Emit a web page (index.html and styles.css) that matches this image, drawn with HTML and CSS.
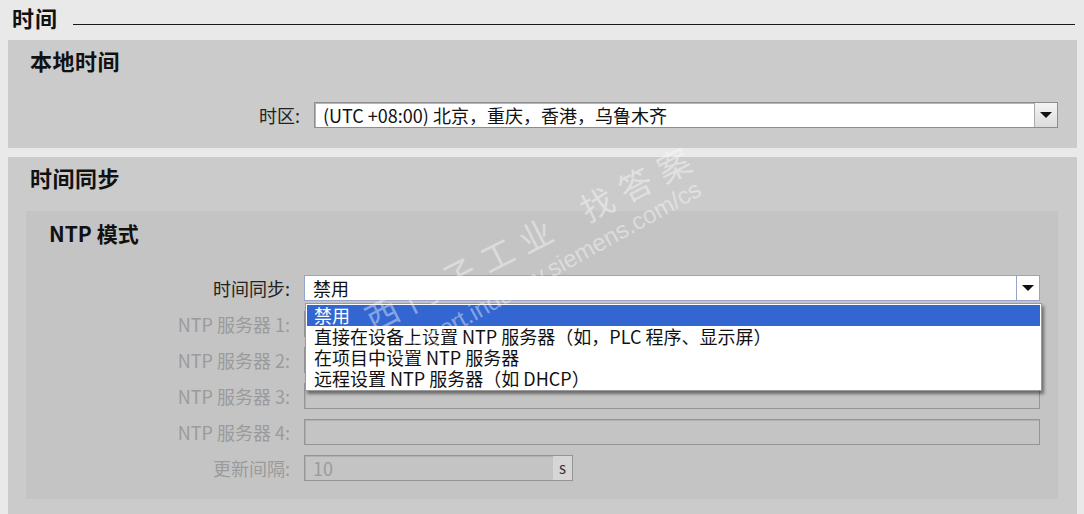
FILE: index.html
```html
<!DOCTYPE html>
<html lang="zh">
<head>
<meta charset="utf-8">
<title>时间</title>
<link rel="stylesheet" href="styles.css">
</head>
<body>
<div class="title-row">
  <h1 class="title">时间</h1>
  <div class="rule"></div>
</div>

<section class="panel panel-local">
  <h2 class="panel-head">本地时间</h2>
  <div class="form-grid grid-local">
    <label class="lbl">时区:</label>
    <div class="select">
      <span class="select-text">(UTC +08:00) 北京，重庆，香港，乌鲁木齐</span>
      <span class="select-btn"><span class="tri"></span></span>
    </div>
  </div>
</section>

<section class="panel panel-sync">
  <h2 class="panel-head">时间同步</h2>
  <div class="inner">
    <h3 class="inner-head">NTP 模式</h3>
    <div class="form-grid grid-ntp">
      <label class="lbl">时间同步:</label>
      <div class="select select-focus">
        <span class="select-text">禁用</span>
        <span class="select-btn"><span class="tri"></span></span>
        <ul class="dropdown">
          <li class="opt opt-sel">禁用</li>
          <li class="opt">直接在设备上设置 NTP 服务器（如，PLC 程序、显示屏）</li>
          <li class="opt">在项目中设置 NTP 服务器</li>
          <li class="opt">远程设置 NTP 服务器（如 DHCP）</li>
        </ul>
      </div>

      <label class="lbl dis">NTP 服务器 1:</label>
      <div class="field"></div>
      <label class="lbl dis">NTP 服务器 2:</label>
      <div class="field"></div>
      <label class="lbl dis">NTP 服务器 3:</label>
      <div class="field"></div>
      <label class="lbl dis">NTP 服务器 4:</label>
      <div class="field"></div>
      <label class="lbl dis">更新间隔:</label>
      <div class="field field-short"><span class="field-val">10</span><span class="unit">s</span></div>
    </div>
  </div>
</section>

<div class="watermark">
  <span class="wm1">西门子工业<span class="wm-gap"></span>找答案</span>
  <span class="wm2">support.industry.siemens.com/cs</span>
</div>
</body>
</html>
```

FILE: styles.css
```css
* { box-sizing: border-box; }

body {
  margin: 0;
  background: #e9e9e9;
  font-family: "Noto Sans CJK SC", "Noto Sans", sans-serif;
  font-size: 18px;
  color: #111;
  height: 514px;
  overflow: hidden;
  position: relative;
}

.title-row {
  display: flex;
  align-items: flex-start;
  height: 40px;
  padding: 3px 9px 0 12px;
}

.title {
  margin: 0;
  font-size: 22px;
  line-height: 28px;
  font-weight: 700;
  letter-spacing: 1px;
}

.rule {
  flex: 1;
  margin-left: 15px;
  margin-top: 21px;
  border-top: 1px solid #1a1a1a;
}

.panel {
  margin: 0 7px 0 8px;
  background: #cbcbcb;
}

.panel-local {
  padding: 5px 19px 20px 22px;
}

.panel-head {
  margin: 0;
  font-size: 22px;
  line-height: 30px;
  font-weight: 700;
  letter-spacing: 0.5px;
}

.form-grid {
  display: grid;
  column-gap: 14px;
  row-gap: 10px;
  align-items: center;
}

.grid-local {
  margin-top: 27px;
  grid-template-columns: 270px 1fr;
}

.grid-ntp {
  margin-top: 27px;
  margin-left: -23px;
  grid-template-columns: 264px 1fr;
}

.lbl {
  text-align: right;
  white-space: nowrap;
  line-height: 26px;
  color: #222;
}

.lbl.dis { color: #9b9b9b; }

.select {
  position: relative;
  height: 26px;
  background: #fff;
  border: 1px solid #8d8d8d;
  box-shadow: inset 1px 1px 0 #b5b5b5;
  display: flex;
  align-items: center;
}

.select-focus {
  border-color: #95a4c9;
  box-shadow: none;
}

.select-text {
  flex: 1;
  padding-left: 8px;
  line-height: 24px;
  white-space: nowrap;
  color: #111;
}

.select-btn {
  width: 23px;
  align-self: stretch;
  border-left: 1px solid #a9a9a9;
  background: linear-gradient(#f4f4f4, #dcdcdc);
  display: flex;
  align-items: center;
  justify-content: center;
}

.select-focus .select-btn {
  border-left-color: #95a4c9;
  background: #fff;
}

.tri {
  width: 0;
  height: 0;
  border-left: 6px solid transparent;
  border-right: 6px solid transparent;
  border-top: 6px solid #111;
}

.panel-sync {
  margin-top: 9px;
  padding: 5px 0 20px 22px;
}

.inner {
  margin: 19px 0 0 -4px;
  width: 1032px;
  background: #c4c4c4;
  padding: 7px 18px 18px 23px;
  height: 288px;
}

.inner-head {
  margin: 0;
  font-size: 21px;
  line-height: 30px;
  font-weight: 700;
}

.field {
  height: 26px;
  border: 1px solid #959595;
  box-shadow: inset 1px 1px 0 #b0b0b0;
  background: #c4c4c4;
  display: flex;
  align-items: center;
}

.field-short {
  width: 269px;
}

.field-val {
  flex: 1;
  padding-left: 8px;
  color: #9b9b9b;
  line-height: 24px;
}

.unit {
  width: 19px;
  align-self: stretch;
  background: #d6d6d6;
  font-size: 15px;
  line-height: 24px;
  text-align: center;
  color: #333;
}

.dropdown {
  position: absolute;
  top: 27px;
  left: 0;
  right: -3px;
  margin: 0;
  padding: 1px;
  list-style: none;
  background: #fff;
  border: 1px solid #9a9a9a;
  box-shadow: 2px 3px 3px rgba(0, 0, 0, 0.45);
  z-index: 5;
}

.opt {
  height: 21px;
  line-height: 21px;
  padding-left: 7px;
  white-space: nowrap;
  color: #111;
}

.opt-sel {
  background: #3366d0;
  color: #fff;
}

.watermark {
  position: absolute;
  inset: 0;
  pointer-events: none;
  z-index: 10;
}

.wm1, .wm2 {
  position: absolute;
  white-space: nowrap;
  color: rgba(255, 255, 255, 0.42);
  transform-origin: 0 50%;
}

.wm1 {
  left: 367px;
  top: 300px;
  font-family: "Noto Sans CJK SC", sans-serif;
  font-size: 33px;
  line-height: 40px;
  letter-spacing: 10px;
  transform: rotate(-27deg);
}

.wm-gap {
  display: inline-block;
  width: 26px;
}

.wm2 {
  left: 395px;
  top: 342px;
  font-family: "Liberation Sans", sans-serif;
  font-size: 24px;
  line-height: 28px;
  transform: rotate(-29deg);
}
```
